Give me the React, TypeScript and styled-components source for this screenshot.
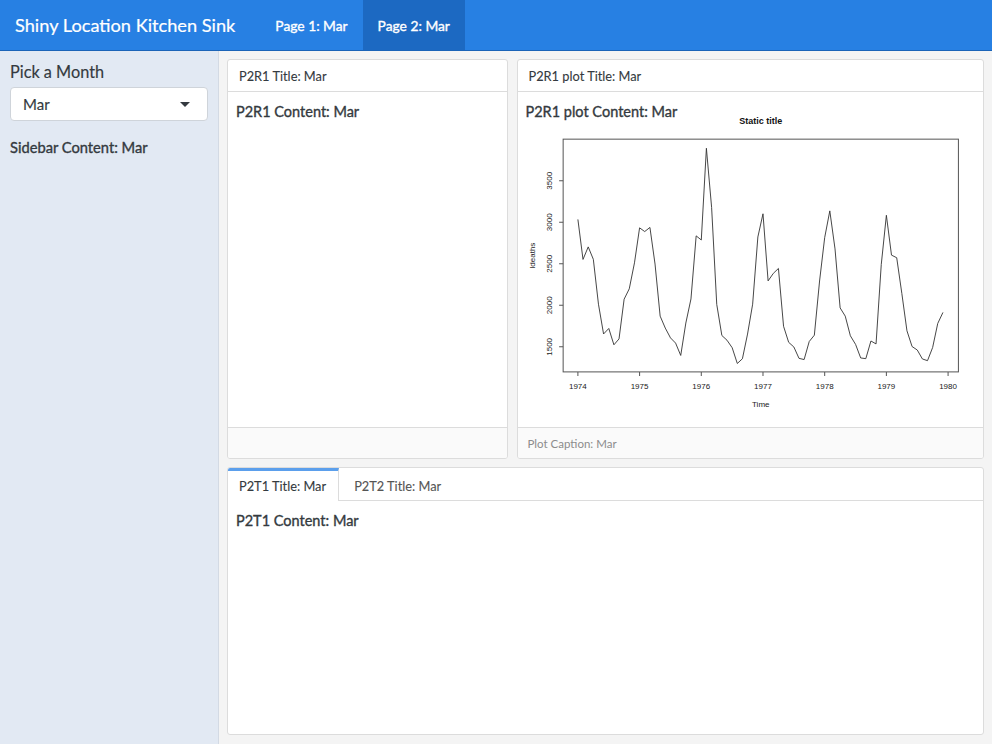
import React from 'react';
import styled, { createGlobalStyle } from 'styled-components';

const GlobalStyle = createGlobalStyle`
  html, body {
    margin: 0;
    padding: 0;
    height: 100%;
  }
  body {
    font-family: Lato, "Open Sans", "Liberation Sans", sans-serif;
    color: #343a40;
    background: #f4f4f4;
  }
`;

const Page = styled.div`
  display: flex;
  flex-direction: column;
  height: 100vh;
`;

const Navbar = styled.nav`
  height: 50px;
  display: flex;
  align-items: stretch;
  background: #2780e3;
  border-bottom: 1px solid #1b64b8;
  padding-left: 15px;
`;

const Brand = styled.div`
  display: flex;
  align-items: center;
  color: #fff;
  font-size: 18.2px;
  margin-right: 25px;
  -webkit-text-stroke: 0.2px currentColor;
`;

const NavLink = styled.a<{ active?: boolean }>`
  display: flex;
  align-items: center;
  padding: 0 15px;
  color: #fff;
  font-size: 13.8px;
  text-decoration: none;
  -webkit-text-stroke: 0.35px currentColor;
  background: ${({ active }) => (active ? '#1c69c2' : 'transparent')};
`;

const Layout = styled.div`
  flex: 1;
  display: grid;
  grid-template-columns: 219px 1fr;
  min-height: 0;
`;

const Sidebar = styled.aside`
  background: #e2e9f3;
  border-right: 1px solid #d3dae4;
  padding: 11px 10px;
  display: flex;
  flex-direction: column;
`;

const Label = styled.label`
  font-size: 16.3px;
  margin-bottom: 6px;
  -webkit-text-stroke: 0.15px currentColor;
`;

const Select = styled.div`
  height: 34px;
  box-sizing: border-box;
  background: #fff;
  border: 1px solid #cfd4da;
  border-radius: 4px;
  display: flex;
  align-items: center;
  justify-content: space-between;
  padding: 0 17px 0 12px;
  font-size: 15px;
  -webkit-text-stroke: 0.15px currentColor;
`;

const Caret = styled.span`
  width: 0;
  height: 0;
  border-left: 5px solid transparent;
  border-right: 5px solid transparent;
  border-top: 5px solid #343a40;
`;

const SidebarText = styled.div`
  margin-top: 17px;
  font-size: 14.7px;
  -webkit-text-stroke: 0.35px currentColor;
`;

const Main = styled.main`
  display: grid;
  grid-template-rows: 400px 1fr;
  row-gap: 8px;
  padding: 8px 8px 9px 8px;
  min-height: 0;
`;

const Row = styled.div`
  display: grid;
  grid-template-columns: 3fr 5fr;
  column-gap: 9px;
  min-height: 0;
`;

const Card = styled.section`
  display: flex;
  flex-direction: column;
  background: #fff;
  border: 1px solid #dcdcdc;
  border-radius: 3px;
  min-height: 0;
  overflow: hidden;
`;

const CardHeader = styled.div`
  height: 31px;
  flex: none;
  display: flex;
  align-items: center;
  padding: 0 11px;
  font-size: 12.8px;
  border-bottom: 1px solid #dcdcdc;
  -webkit-text-stroke: 0.1px currentColor;
`;

const CardBody = styled.div`
  flex: 1;
  padding: 11px 8px 7px;
  display: grid;
  grid-template: 1fr / 1fr;
  min-height: 0;
`;

const BodyText = styled.div`
  grid-area: 1 / 1;
  font-size: 14.5px;
  -webkit-text-stroke: 0.35px currentColor;
  align-self: start;
`;

const PlotLayer = styled.svg`
  grid-area: 1 / 1;
  margin: -11px -8px -7px;
  width: calc(100% + 16px);
  height: calc(100% + 18px);
  overflow: visible;
`;

const CardFooter = styled.div`
  height: 30px;
  flex: none;
  display: flex;
  align-items: center;
  padding: 0 10px;
  font-size: 11.5px;
  color: #8c8c8c;
  background: #fafafa;
  border-top: 1px solid #dcdcdc;
`;

const TabBar = styled.div`
  display: flex;
  height: 32px;
  flex: none;
  border-bottom: 1px solid #dcdcdc;
`;

const Tab = styled.div<{ active?: boolean }>`
  display: flex;
  align-items: center;
  padding: 0 12px 0 ${({ active }) => (active ? '11px' : '15px')};
  font-size: 12.8px;
  -webkit-text-stroke: 0.1px currentColor;
  color: ${({ active }) => (active ? '#343a40' : '#555')};
  background: #fff;
  border-top: 3px solid ${({ active }) => (active ? '#5b9fec' : 'transparent')};
  border-right: 1px solid ${({ active }) => (active ? '#dcdcdc' : 'transparent')};
  margin-bottom: ${({ active }) => (active ? '-1px' : '0')};
  box-sizing: border-box;
`;

const ldeaths = [
  3035, 2552, 2704, 2554, 2014, 1655, 1721, 1524, 1596, 2074, 2199, 2512,
  2933, 2889, 2938, 2497, 1870, 1726, 1607, 1545, 1396, 1787, 2076, 2837,
  2787, 3891, 3179, 2011, 1636, 1580, 1489, 1300, 1356, 1653, 2013, 2823,
  3102, 2294, 2385, 2444, 1748, 1554, 1498, 1361, 1346, 1564, 1640, 2293,
  2815, 3137, 2679, 1969, 1870, 1633, 1529, 1366, 1357, 1570, 1535, 2491,
  3084, 2605, 2573, 2143, 1693, 1504, 1461, 1354, 1333, 1492, 1781, 1915,
];

// plot coordinates are in page pixels, the viewBox starts at the card body
const px = (t: number) => 577.7 + (t - 1974) * 61.5;
const py = (v: number) => 346 - (v - 1500) * 0.08275;

const LinePlot: React.FC = () => {
  const points = ldeaths
    .map((v, i) => `${px(1974 + i / 12).toFixed(1)},${py(v).toFixed(1)}`)
    .join(' ');
  const years = [1974, 1975, 1976, 1977, 1978, 1979, 1980];
  const yTicks = [1500, 2000, 2500, 3000, 3500];
  const font = '"Liberation Sans", Arial, sans-serif';
  return (
    <PlotLayer viewBox="518 92 464 335" preserveAspectRatio="xMinYMin meet">
      <text x={760} y={124} textAnchor="middle" fontSize={9} fontWeight="bold" fontFamily={font} fill="#111">
        Static title
      </text>
      <rect x={563} y={139} width={394} height={232} fill="none" stroke="#555" strokeWidth={1} />
      <polyline points={points} fill="none" stroke="#333" strokeWidth={0.9} />
      {years.map((y) => (
        <g key={y}>
          <line x1={px(y)} x2={px(y)} y1={371} y2={375} stroke="#555" />
          <text x={px(y)} y={388} textAnchor="middle" fontSize={8} fontFamily={font} fill="#222">
            {y}
          </text>
        </g>
      ))}
      {yTicks.map((v) => (
        <g key={v}>
          <line x1={559} x2={563} y1={py(v)} y2={py(v)} stroke="#555" />
          <text
            x={552}
            y={py(v)}
            transform={`rotate(-90 552 ${py(v)})`}
            textAnchor="middle"
            fontSize={8}
            fontFamily={font}
            fill="#222"
          >
            {v}
          </text>
        </g>
      ))}
      <text x={760} y={406} textAnchor="middle" fontSize={8} fontFamily={font} fill="#222">
        Time
      </text>
      <text x={535} y={255} transform="rotate(-90 535 255)" textAnchor="middle" fontSize={8} fontFamily={font} fill="#222">
        ldeaths
      </text>
    </PlotLayer>
  );
};

const App: React.FC = () => {
  return (
    <>
      <GlobalStyle />
      <Page>
        <Navbar>
          <Brand>Shiny Location Kitchen Sink</Brand>
          <NavLink>Page 1: Mar</NavLink>
          <NavLink active>Page 2: Mar</NavLink>
        </Navbar>
        <Layout>
          <Sidebar>
            <Label>Pick a Month</Label>
            <Select>
              <span>Mar</span>
              <Caret />
            </Select>
            <SidebarText>Sidebar Content: Mar</SidebarText>
          </Sidebar>
          <Main>
            <Row>
              <Card>
                <CardHeader>P2R1 Title: Mar</CardHeader>
                <CardBody>
                  <BodyText>P2R1 Content: Mar</BodyText>
                </CardBody>
                <CardFooter />
              </Card>
              <Card>
                <CardHeader>P2R1 plot Title: Mar</CardHeader>
                <CardBody>
                  <LinePlot />
                  <BodyText>P2R1 plot Content: Mar</BodyText>
                </CardBody>
                <CardFooter>Plot Caption: Mar</CardFooter>
              </Card>
            </Row>
            <Card>
              <TabBar>
                <Tab active>P2T1 Title: Mar</Tab>
                <Tab>P2T2 Title: Mar</Tab>
              </TabBar>
              <CardBody>
                <BodyText>P2T1 Content: Mar</BodyText>
              </CardBody>
            </Card>
          </Main>
        </Layout>
      </Page>
    </>
  );
};

export default App;
